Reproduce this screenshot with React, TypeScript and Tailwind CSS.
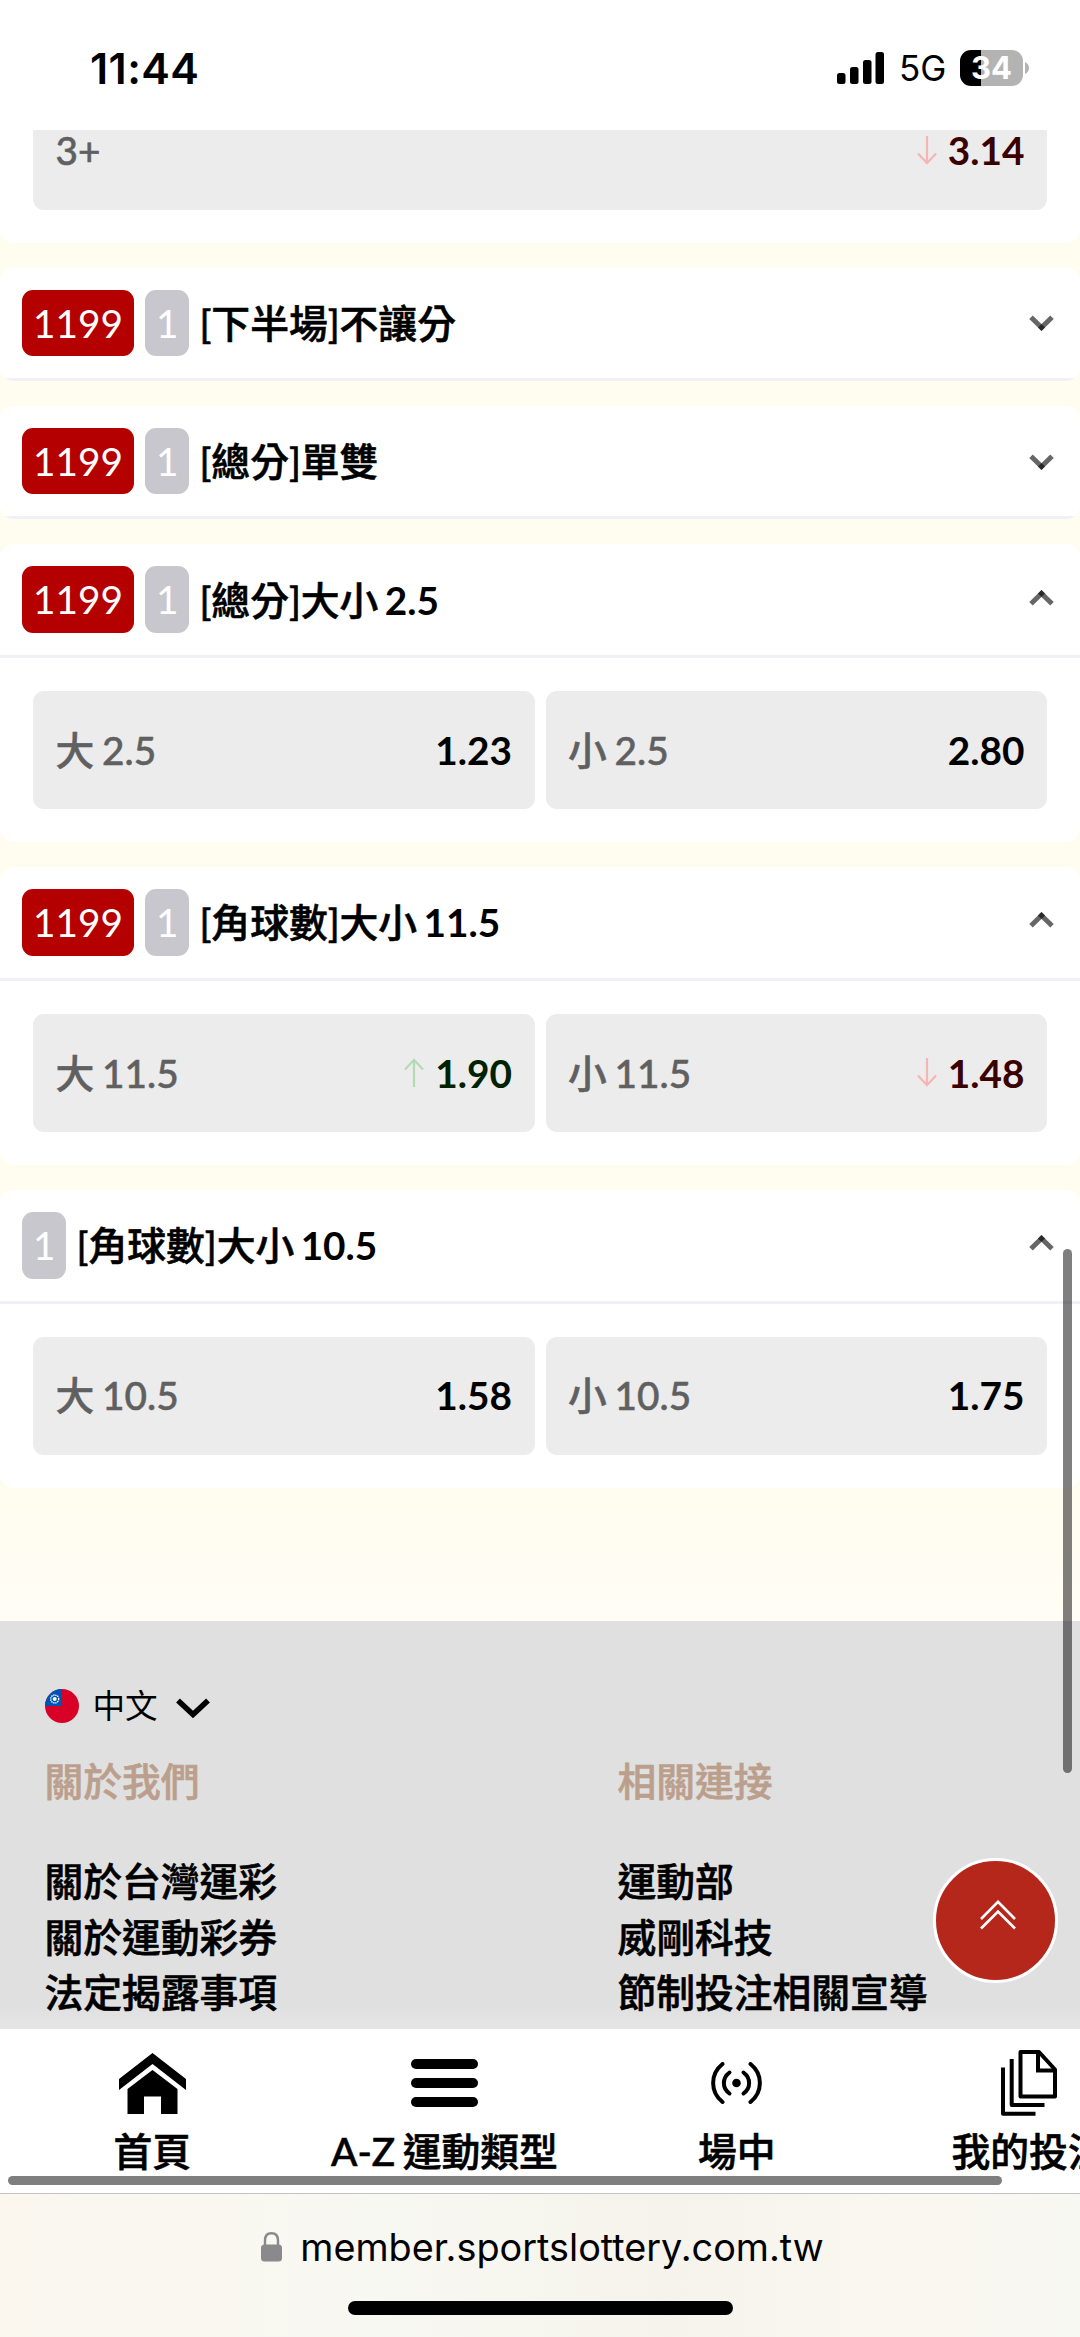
import { useState } from 'react';

type Trend = 'up' | 'down';

interface Selection {
  label: string;
  odds: string;
  trend?: Trend;
}

interface Market {
  id: string;
  code?: string;
  title: string;
  line?: string;
  selections: Selection[];
  open: boolean;
}

const markets: Market[] = [
  { id: 'h2-ml', code: '1199', title: '[下半場]不讓分', selections: [], open: false },
  { id: 'odd-even', code: '1199', title: '[總分]單雙', selections: [], open: false },
  {
    id: 'total-2.5',
    code: '1199',
    title: '[總分]大小',
    line: '2.5',
    open: true,
    selections: [
      { label: '大 2.5', odds: '1.23' },
      { label: '小 2.5', odds: '2.80' },
    ],
  },
  {
    id: 'corner-11.5',
    code: '1199',
    title: '[角球數]大小',
    line: '11.5',
    open: true,
    selections: [
      { label: '大 11.5', odds: '1.90', trend: 'up' },
      { label: '小 11.5', odds: '1.48', trend: 'down' },
    ],
  },
  {
    id: 'corner-10.5',
    title: '[角球數]大小',
    line: '10.5',
    open: true,
    selections: [
      { label: '大 10.5', odds: '1.58' },
      { label: '小 10.5', odds: '1.75' },
    ],
  },
];

const footerColumns = [
  { heading: '關於我們', links: ['關於台灣運彩', '關於運動彩券', '法定揭露事項'] },
  { heading: '相關連接', links: ['運動部', '威剛科技', '節制投注相關宣導'] },
];

function StatusBar() {
  return (
    <div className="h-[130px] shrink-0 bg-white flex justify-between items-start pl-[90px] pr-[51px] pt-[50px] font-['Inter',sans-serif] text-black">
      <span className="text-[43px] leading-[37px] font-semibold tracking-[0.4px]">11:44</span>
      <div className="flex items-center h-9">
        <svg className="w-[47px] h-8" viewBox="0 0 47 32">
          <rect x="0" y="21" width="8.5" height="11" rx="2.5" />
          <rect x="13" y="15" width="8.5" height="17" rx="2.5" />
          <rect x="26" y="8" width="8.5" height="24" rx="2.5" />
          <rect x="38.5" y="0" width="8.5" height="32" rx="2.5" />
        </svg>
        <span className="ml-[15px] w-[61px] text-[35px] leading-9">5G</span>
        <div className="w-[63px] h-9 rounded-[11px] bg-[linear-gradient(90deg,#000_34%,#b3b3b3_34%)] text-white text-[31px] leading-9 font-bold text-center">
          34
        </div>
        <svg className="w-1 h-3 ml-0.5" viewBox="0 0 4 12">
          <path d="M0 0 Q4 2 4 6 Q4 10 0 12Z" fill="#b3b3b3" />
        </svg>
      </div>
    </div>
  );
}

function Chevron({ open }: { open: boolean }) {
  return (
    <svg
      className={`w-[25px] h-4 ${open ? '-mt-1' : 'mt-px'}`}
      viewBox="0 0 25 16"
      stroke="#000"
      strokeOpacity={0.6}
      strokeWidth={5}
    >
      {open ? (
        <>
          <path d="M2 13.8 L14.3 1.8" />
          <path d="M23 13.8 L10.7 1.8" />
        </>
      ) : (
        <>
          <path d="M2 2.2 L14.3 14.2" />
          <path d="M23 2.2 L10.7 14.2" />
        </>
      )}
    </svg>
  );
}

function TrendArrow({ trend }: { trend: Trend }) {
  return trend === 'up' ? (
    <svg className="w-5 h-[29px] mr-[11px]" viewBox="0 0 20 29" fill="none" stroke="#b4d9b5" strokeWidth={2.2}>
      <path d="M10 29 V2 M1 11.5 L10 1.8 L19 11.5" />
    </svg>
  ) : (
    <svg className="w-5 h-[29px] mr-[11px]" viewBox="0 0 20 29" fill="none" stroke="#f5b5b5" strokeWidth={2.2}>
      <path d="M10 0 V27 M1 17.5 L10 27.2 L19 17.5" />
    </svg>
  );
}

function SelectionButton({ selection }: { selection: Selection }) {
  const { label, odds, trend } = selection;
  const oddsColor = trend === 'up' ? 'text-[#002200]' : trend === 'down' ? 'text-[#3a0000]' : 'text-black';

  return (
    <button className="flex-1 h-[118.2px] px-[22.5px] pb-px flex items-center rounded-[11px] bg-[#ececec]">
      <span className="mr-auto text-[#606060] font-medium [word-spacing:-2px] [-webkit-text-stroke:0.5px]">{label}</span>
      {trend && <TrendArrow trend={trend} />}
      <span className={`font-bold ${oddsColor}`}>{odds}</span>
    </button>
  );
}

function MarketCard({ market }: { market: Market }) {
  const [open, setOpen] = useState(market.open);

  return (
    <section className="bg-white rounded-[14px] overflow-hidden shrink-0">
      <div
        className="h-[113.5px] flex items-center border-b-[3px] border-[#f0f0f6] pl-[22px] pr-[26px]"
        onClick={() => setOpen(!open)}
      >
        {market.code && (
          <span className="mr-[11px] px-[11px] h-[66.5px] leading-[66.5px] rounded-[11px] bg-[#b50000] text-white">
            {market.code}
          </span>
        )}
        <span className="px-[11px] h-[66.5px] leading-[66.5px] rounded-[11px] bg-[#c8c7ce] text-white">1</span>
        <h2 className="ml-[10px] mr-auto font-medium text-black [word-spacing:-3px] [-webkit-text-stroke:0.6px]">
          {market.title}
          {market.line && <span className="font-bold [-webkit-text-stroke:0px]"> {market.line}</span>}
        </h2>
        <Chevron open={open} />
      </div>
      {open && (
        <div className="flex gap-[11px] px-[33px] py-[33.2px]">
          {market.selections.map((s) => (
            <SelectionButton key={s.label} selection={s} />
          ))}
        </div>
      )}
    </section>
  );
}

function FlagIcon() {
  return (
    <svg className="w-[34px] h-[34px]" viewBox="0 0 34 34">
      <circle cx="17" cy="17" r="17" fill="#d80027" />
      <path d="M17 0 A17 17 0 0 0 0 17 H17Z" fill="#0052b4" />
      <circle cx="9.7" cy="10" r="4" fill="none" stroke="#fff" strokeWidth="1.3" strokeDasharray="1.4 0.7" />
      <circle cx="9.7" cy="10" r="2" fill="#fff" />
    </svg>
  );
}

function Footer() {
  return (
    <footer className="flex-1 bg-[linear-gradient(#e0e0e0_94%,#e5e5e5)] px-[44.5px] pt-[66px] text-black">
      <div className="flex items-center h-[38px]">
        <FlagIcon />
        <span className="ml-[14px] text-[32.6px] leading-[38px]">中文</span>
        <svg className="ml-[18px] mt-1 w-[34px] h-5" viewBox="0 0 34 20" fill="none" stroke="#000" strokeWidth={5.5}>
          <path d="M2 2.5 L17 16.5 L32 2.5" />
        </svg>
      </div>
      <div className="flex mt-[29px]">
        {footerColumns.map((col) => (
          <div
            key={col.heading}
            className="w-[573px] shrink-0 leading-[55.4px] font-medium [-webkit-text-stroke:0.6px]"
          >
            <h3 className="text-[#bb9f8c] font-medium mb-[44.5px]">{col.heading}</h3>
            <ul>
              {col.links.map((link) => (
                <li key={link}>{link}</li>
              ))}
            </ul>
          </div>
        ))}
      </div>
    </footer>
  );
}

function HomeIcon() {
  return (
    <svg className="w-[67px] h-[61px]" viewBox="0 0 67 61">
      <path d="M33.5 0 L67 26 V37 L33.5 11 L0 37 V26Z" />
      <path d="M33.5 17 L58.5 36 V61 H42 V43.5 H25 V61 H8.5 V36Z" />
    </svg>
  );
}

function MenuIcon() {
  return (
    <svg className="w-[67px] h-12" viewBox="0 0 67 48">
      <rect width="67" height="10" rx="5" />
      <rect y="19" width="67" height="10" rx="5" />
      <rect y="38" width="67" height="10" rx="5" />
    </svg>
  );
}

function LiveIcon() {
  return (
    <svg className="w-[51px] h-[42px]" viewBox="0 0 51 42" fill="none" stroke="#000" strokeWidth={4} strokeLinecap="round">
      <circle cx="25.5" cy="21" r="4.3" fill="#000" stroke="none" />
      <path d="M18.5 10.5 C11 16 11 26 18.5 31.5 M32.5 10.5 C40 16 40 26 32.5 31.5" />
      <path d="M11.5 2 C-1 12 -1 30 11.5 40 M39.5 2 C52 12 52 30 39.5 40" />
    </svg>
  );
}

function SlipsIcon() {
  return (
    <svg className="w-14 h-[66px]" viewBox="0 0 56 66" fill="none" stroke="#000" strokeWidth={4} strokeLinejoin="round">
      <path d="M19.5 2 H38 L54 19.5 V46.5 H19.5Z" />
      <path d="M37 2.5 V20.5 H54" strokeLinejoin="miter" />
      <path d="M10.7 9 V55 H43.5" />
      <path d="M2 17.5 V63.8 H34.5" />
    </svg>
  );
}

const navItems = [
  { label: '首頁', icon: <HomeIcon /> },
  { label: 'A-Z 運動類型', icon: <MenuIcon /> },
  { label: '場中', icon: <LiveIcon /> },
  { label: '我的投注', icon: <SlipsIcon /> },
];

function BottomNav() {
  return (
    <nav className="relative h-[164px] shrink-0 bg-white flex overflow-hidden pl-1.5">
      {navItems.map((item) => (
        <div key={item.label} className="w-[292.3px] shrink-0 flex flex-col items-center">
          <div className="mt-5 h-[68px] flex items-center">{item.icon}</div>
          <span className="mt-1.5 leading-[56px] font-medium text-black whitespace-nowrap [word-spacing:-2px] [-webkit-text-stroke:0.6px]">
            {item.label}
          </span>
        </div>
      ))}
      <div className="absolute left-2 top-[147px] w-[994px] h-[9px] rounded-full bg-[#7f7f7f]" />
    </nav>
  );
}

function AddressBar() {
  return (
    <div className="h-36 shrink-0 flex flex-col items-center border-t border-[#c4c4c4] bg-[linear-gradient(90deg,#fbf7ef,#f8f8f2_35%,#f5f3ec_62%,#faf7ef_80%,#f8f8f3)]">
      <div className="flex items-center mt-[27px] h-[52px] pl-[5px]">
        <svg className="w-[21px] h-[30px]" viewBox="0 0 21 30">
          <path d="M4 14 V8.5 Q4 1.3 10.5 1.3 Q17 1.3 17 8.5 V14" fill="none" stroke="#8a8a8d" strokeWidth="2.4" />
          <rect y="12.5" width="21" height="17" rx="3.5" fill="#8a8a8d" />
        </svg>
        <span className="ml-[18px] text-[37.8px] leading-[50px] text-black font-['Inter',sans-serif]">
          member.sportslottery.com.tw
        </span>
      </div>
      <div className="mt-7 w-[385px] h-3.5 rounded-full bg-black" />
    </div>
  );
}

export default function App() {
  return (
    <div
      lang="zh-Hant"
      className="relative w-[1080px] h-[2337px] overflow-hidden flex flex-col font-['Lato','Noto_Sans_CJK_TC',sans-serif] text-[38.77px] leading-[56px]"
    >
      <StatusBar />
      <main className="flex-1 min-h-0 overflow-hidden flex flex-col bg-[#fffdf0]">
        {/* tail of the market that is scrolled under the status bar */}
        <section className="bg-white rounded-b-[14px] px-[33px] pb-[33px] mb-[24.5px]">
          <div className="h-20 px-[22.5px] flex items-start rounded-b-[11px] bg-[#ececec] leading-10">
            <span className="mr-auto text-[#606060] font-medium [-webkit-text-stroke:0.5px]">3+</span>
            <span className="flex items-center text-[#3a0000] font-bold">
              <TrendArrow trend="down" />
              3.14
            </span>
          </div>
        </section>
        <div className="flex flex-col gap-[24.9px]">
          {markets.map((m) => (
            <MarketCard key={m.id} market={m} />
          ))}
        </div>
        <div className="h-[133px] shrink-0 bg-[linear-gradient(#fffdf0,#fffdf5)]" />
        <Footer />
      </main>
      <BottomNav />
      <AddressBar />

      <button className="absolute left-[933px] top-[1858px] w-[125px] h-[125px] rounded-full border-[3px] border-white bg-[#b5271a] flex justify-center">
        <svg className="mt-[39px] ml-1 w-9 h-[30px]" viewBox="0 0 36 30" fill="none" stroke="#fff" strokeWidth={2.6}>
          <path d="M1 19 L18 1.8 L35 19 M1 28.5 L18 11.5 L35 28.5" />
        </svg>
      </button>
      <div className="absolute left-[1063px] top-[1249px] w-[9px] h-[524px] rounded-full bg-black/50" />
    </div>
  );
}
